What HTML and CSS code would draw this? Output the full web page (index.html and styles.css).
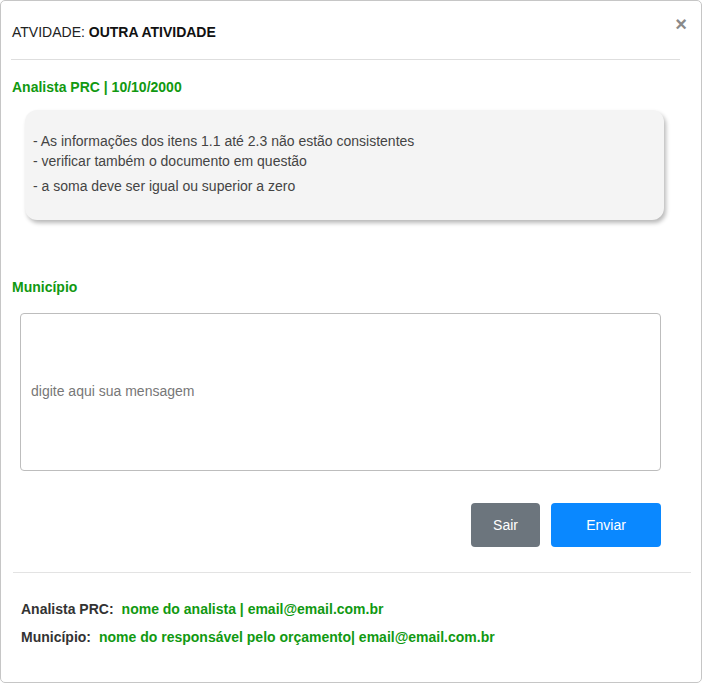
FILE: index.html
```html
<!DOCTYPE html>
<html lang="pt-BR">
<head>
<meta charset="utf-8">
<title>Atividade</title>
<link rel="stylesheet" href="styles.css">
</head>
<body>
<div class="modal">
  <div class="modal-header">
    <span class="title">ATVIDADE: <b>OUTRA ATIVIDADE</b></span>
  </div>
  <button class="close" type="button" aria-label="Fechar">&times;</button>
  <div class="modal-body">
    <div class="section-title">Analista PRC | 10/10/2000</div>
    <div class="note">
      <p>- As informações dos itens 1.1 até 2.3 não estão consistentes<br>- verificar também o documento em questão</p>
      <p>- a soma deve ser igual ou superior a zero</p>
    </div>
    <div class="section-title municipio">Município</div>
    <textarea class="message" placeholder="digite aqui sua mensagem"></textarea>
    <div class="actions">
      <button class="btn btn-secondary" type="button">Sair</button>
      <button class="btn btn-primary" type="button">Enviar</button>
    </div>
  </div>
  <div class="modal-footer">
    <div class="contact"><span class="label">Analista PRC:</span><span class="value">nome do analista | email@email.com.br</span></div>
    <div class="contact"><span class="label">Município:</span><span class="value">nome do responsável pelo orçamento| email@email.com.br</span></div>
  </div>
</div>
</body>
</html>
```

FILE: styles.css
```css
* { box-sizing: border-box; }
html, body { margin: 0; padding: 0; background: #fff; }
body { font-family: "Liberation Sans", Arial, sans-serif; font-size: 14px; line-height: 16px; color: #333; }

.modal {
  position: relative;
  width: 702px;
  height: 683px;
  border: 1px solid #c6c6c6;
  border-radius: 5px;
  background: #fff;
}

.modal-header {
  margin: 0 21px 0 10px;
  padding: 23px 0 19px 1px;
  border-bottom: 1px solid #dedede;
}
.title { color: #222; }
.title b { color: #111; }

.close {
  position: absolute;
  top: 13px;
  right: 14px;
  border: 0;
  background: none;
  padding: 0;
  font-family: "Liberation Sans", Arial, sans-serif;
  font-size: 20px;
  line-height: 20px;
  font-weight: bold;
  color: #8a8a8a;
  cursor: pointer;
}

.modal-body { padding: 19px 40px 0 11px; }

.section-title { font-weight: bold; color: #119911; }
.municipio { margin-top: 59px; }

.note {
  margin: 15px 0 0 13px;
  width: 639px;
  padding: 21px 8px 24px 8px;
  background: #f4f4f4;
  border-radius: 12px;
  box-shadow: 2px 3px 4px rgba(0, 0, 0, 0.28);
  color: #444;
  line-height: 20px;
}
.note p { margin: 0; }
.note p + p { margin-top: 5px; }

.message {
  display: block;
  margin: 18px 0 0 8px;
  width: 641px;
  height: 158px;
  padding: 69px 10px 0 10px;
  border: 1px solid #bdbdbd;
  border-radius: 4px;
  font-family: "Liberation Sans", Arial, sans-serif;
  font-size: 14px;
  line-height: 16px;
  color: #333;
  resize: none;
  outline: none;
}
.message::placeholder { color: #777; opacity: 1; }

.actions {
  display: flex;
  justify-content: flex-end;
  gap: 11px;
  margin-top: 32px;
  width: 649px;
}
.btn {
  height: 44px;
  border: 0;
  border-radius: 4px;
  color: #fff;
  font-family: "Liberation Sans", Arial, sans-serif;
  font-size: 14px;
  line-height: 16px;
  padding: 0 0 1px;
}
.btn-secondary { width: 69px; background: #6c757d; }
.btn-primary { width: 110px; background: #0a88ff; }

.modal-footer {
  margin: 25px 10px 0 12px;
  padding: 28px 0 0 8px;
  border-top: 1px solid #e3e3e3;
  font-weight: bold;
}
.contact + .contact { margin-top: 12px; }
.label { color: #333; }
.value { color: #119911; margin-left: 8px; }
```
